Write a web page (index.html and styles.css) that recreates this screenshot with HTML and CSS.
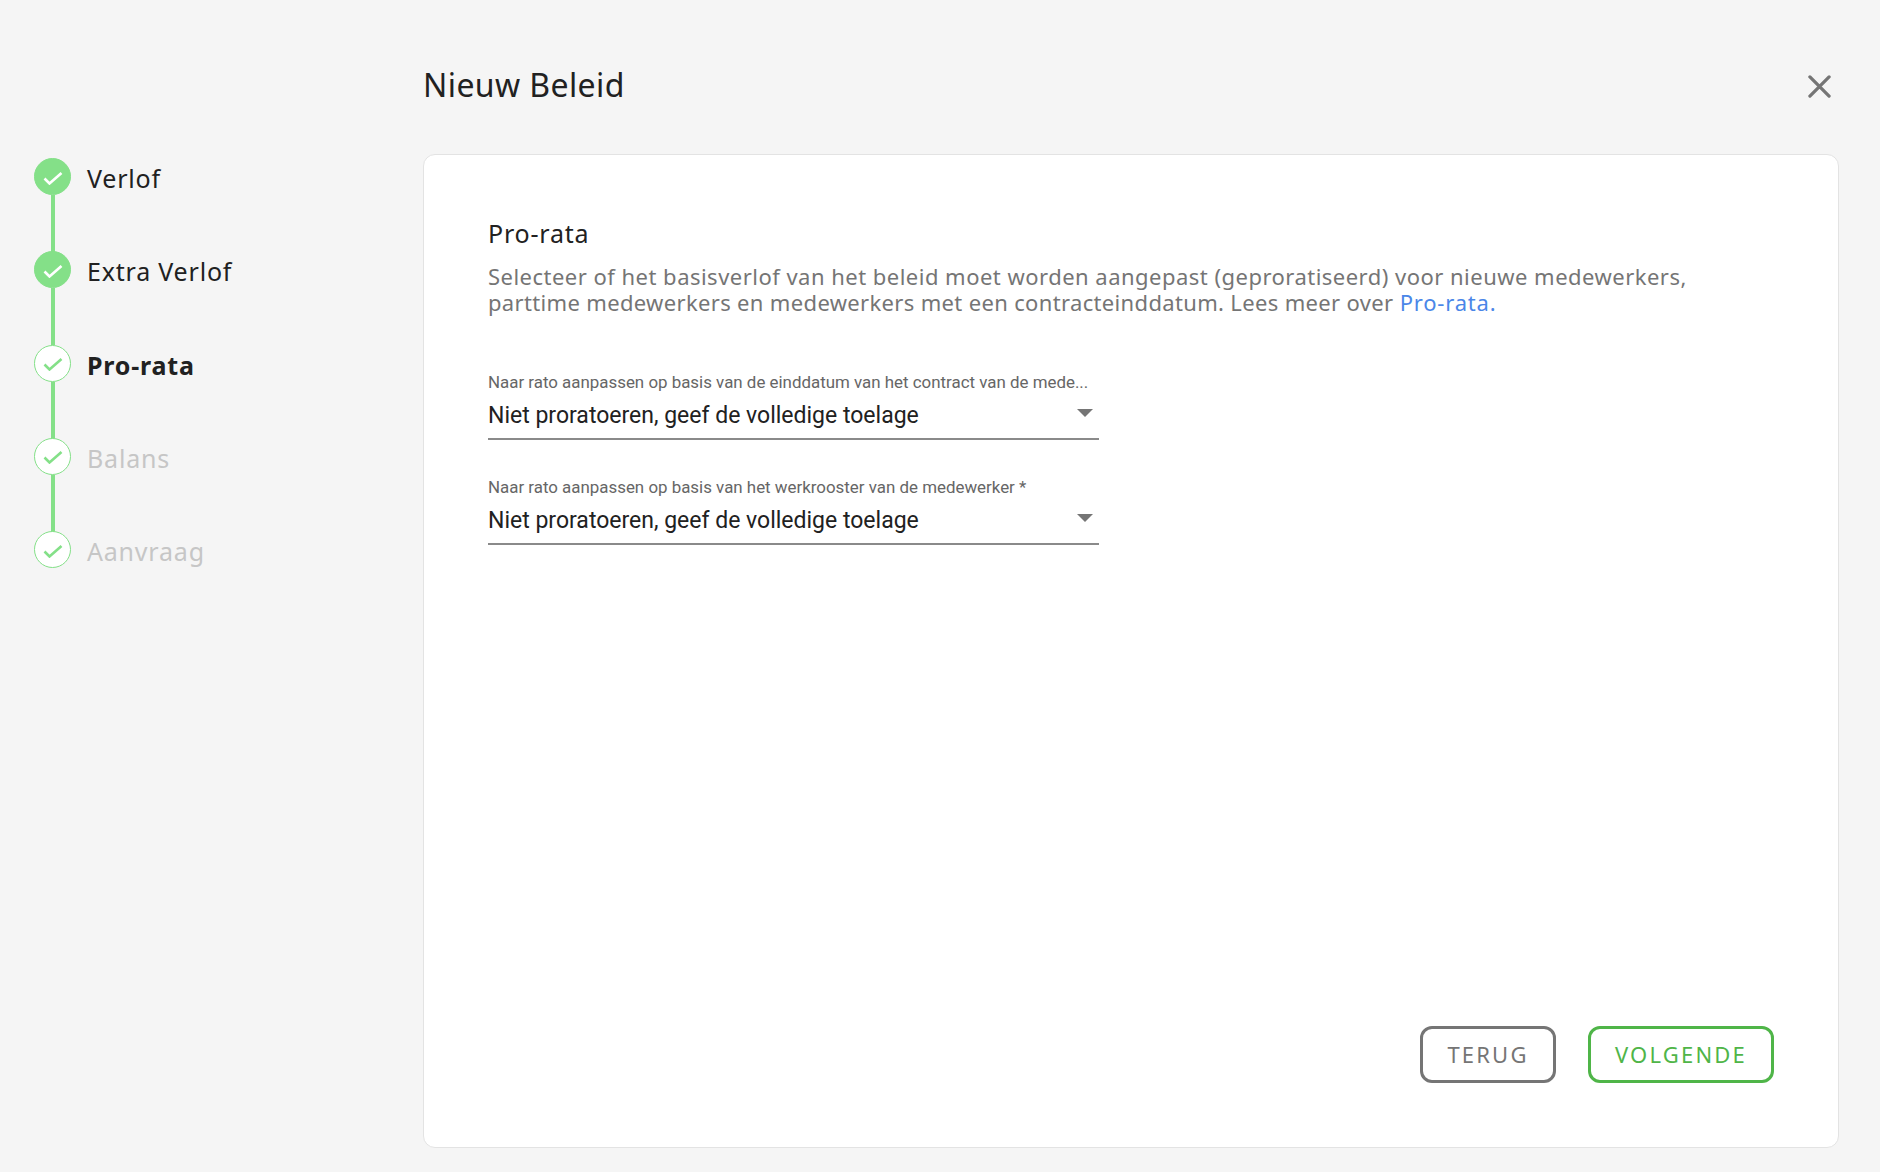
FILE: index.html
```html
<!DOCTYPE html>
<html lang="nl">
<head>
<meta charset="utf-8">
<title>Nieuw Beleid</title>
<link rel="stylesheet" href="styles.css">
</head>
<body>
<div class="page">
  <nav class="stepper">
    <div class="step done"><span class="dot"><svg viewBox="0 0 20 14" class="tick"><path d="M1.500 7.500l5 5L18.500 2"/></svg></span><span class="step-label">Verlof</span></div>
    <div class="step done"><span class="dot"><svg viewBox="0 0 20 14" class="tick"><path d="M1.500 7.500l5 5L18.500 2"/></svg></span><span class="step-label">Extra Verlof</span></div>
    <div class="step active"><span class="dot"><svg viewBox="0 0 20 14" class="tick"><path d="M1.500 7.500l5 5L18.500 2"/></svg></span><span class="step-label">Pro-rata</span></div>
    <div class="step todo"><span class="dot"><svg viewBox="0 0 20 14" class="tick"><path d="M1.500 7.500l5 5L18.500 2"/></svg></span><span class="step-label">Balans</span></div>
    <div class="step todo last"><span class="dot"><svg viewBox="0 0 20 14" class="tick"><path d="M1.500 7.500l5 5L18.500 2"/></svg></span><span class="step-label">Aanvraag</span></div>
  </nav>
  <main class="main">
    <header class="head">
      <h1 class="title">Nieuw Beleid</h1>
      <button class="close" aria-label="Sluiten"><svg viewBox="0 0 24 24"><path d="M2 2l20 20M22 2L2 22"/></svg></button>
    </header>
    <section class="card">
      <h2 class="card-title">Pro-rata</h2>
      <p class="desc">Selecteer of het basisverlof van het beleid moet worden aangepast (geproratiseerd) voor nieuwe medewerkers, <span class="desc-tail">parttime medewerkers en medewerkers met een contracteinddatum. Lees meer over</span> <a class="link" href="#">Pro-rata.</a></p>
      <div class="field">
        <div class="field-label">Naar rato aanpassen op basis van de einddatum van het contract van de mede...</div>
        <div class="field-value"><span>Niet proratoeren, geef de volledige toelage</span><i class="caret"></i></div>
      </div>
      <div class="field">
        <div class="field-label">Naar rato aanpassen op basis van het werkrooster van de medewerker *</div>
        <div class="field-value"><span>Niet proratoeren, geef de volledige toelage</span><i class="caret"></i></div>
      </div>
      <div class="actions">
        <button class="btn back">TERUG</button>
        <button class="btn next">VOLGENDE</button>
      </div>
    </section>
  </main>
</div>
</body>
</html>
```
FILE: styles.css
```css
* { box-sizing: border-box; }
html, body { margin: 0; height: 100%; }
body {
  background: #f5f5f5;
  font-family: "Noto Sans", "Open Sans", sans-serif;
  color: #212121;
}
.page { display: flex; height: 1172px; overflow: hidden; }

.stepper {
  width: 423px;
  flex: none;
  padding: 158px 0 0 34px;
  display: flex;
  flex-direction: column;
}
.step {
  position: relative;
  height: 93.3px;
  display: flex;
  align-items: flex-start;
  gap: 16px;
}
.step::after {
  content: "";
  position: absolute;
  left: 17px;
  top: 37px;
  width: 4px;
  height: 57px;
  background: #84e088;
}
.step.last::after { display: none; }
.dot {
  width: 37px;
  height: 37px;
  flex: none;
  border-radius: 50%;
  border: 1.500px solid #84e088;
  background: #fff;
  display: flex;
  align-items: center;
  justify-content: center;
}
.tick { width: 20px; height: 14px; margin-top: 2px; }
.tick path { fill: none; stroke: #84e088; stroke-width: 2.600; }
.done .dot { background: #84e088; }
.done .tick path { stroke: #fff; }
.step-label {
  font-size: 25px;
  line-height: 37px;
  letter-spacing: 0.800px;
  margin-top: 2px;
}
.active .step-label { font-weight: 700; }
.todo .step-label { color: #c6c6c6; }

.main { flex: 1; display: flex; flex-direction: column; padding-right: 41px; }
.head {
  height: 154px;
  flex: none;
  display: flex;
  justify-content: space-between;
  align-items: flex-start;
  padding-top: 63px;
}
.title {
  margin: 0;
  font-size: 32px;
  line-height: 44px;
  font-weight: 400;
  letter-spacing: 0.400px;
}
.close {
  width: 23px;
  height: 23px;
  margin: 12px 8px 0 0;
  padding: 0;
  border: 0;
  background: none;
}
.close svg { display: block; width: 23px; height: 23px; }
.close path { fill: none; stroke: #757575; stroke-width: 3.400; stroke-linecap: round; }

.card {
  position: relative;
  width: 1416px;
  height: 994px;
  background: #fff;
  border: 1px solid #e3e3e3;
  border-radius: 12px;
  padding: 61px 64px 0;
}
.card-title {
  margin: 0;
  font-size: 25px;
  line-height: 34px;
  font-weight: 400;
  letter-spacing: 0.800px;
}
.desc {
  margin: 13px 0 0;
  font-size: 22px;
  line-height: 26px;
  letter-spacing: 0.480px;
  color: #757575;
  width: 1230px;
}
.desc-tail { letter-spacing: 0.340px; }
.link { color: #4a86e8; text-decoration: none; letter-spacing: 0.800px; }

.field { width: 611px; height: 105px; }
.desc + .field { margin-top: 56px; }
.field-label {
  font-family: Roboto, "Noto Sans", sans-serif;
  font-size: 16.900px;
  line-height: 22px;
  color: #666;
  white-space: nowrap;
}
.field-value {
  display: flex;
  justify-content: space-between;
  align-items: flex-start;
  height: 47px;
  padding-top: 8px;
  border-bottom: 2px solid #8a8a8a;
  font-family: Roboto, "Noto Sans", sans-serif;
  font-size: 23px;
  line-height: 30px;
  color: #212121;
}
.caret {
  width: 0;
  height: 0;
  margin: 8px 6px 0 0;
  border-left: 8.500px solid transparent;
  border-right: 8.500px solid transparent;
  border-top: 8.500px solid #757575;
}

.actions {
  position: absolute;
  right: 64px;
  bottom: 64px;
  display: flex;
  gap: 32px;
}
.btn {
  height: 57px;
  padding: 0 0 2px;
  border-radius: 12px;
  background: #fff;
  border: 3px solid;
  font-family: inherit;
  font-size: 22px;
  letter-spacing: 2.200px;
}
.back { width: 136px; color: #757575; border-color: #757575; }
.next { width: 186px; color: #4fb548; border-color: #4fb548; }
```
